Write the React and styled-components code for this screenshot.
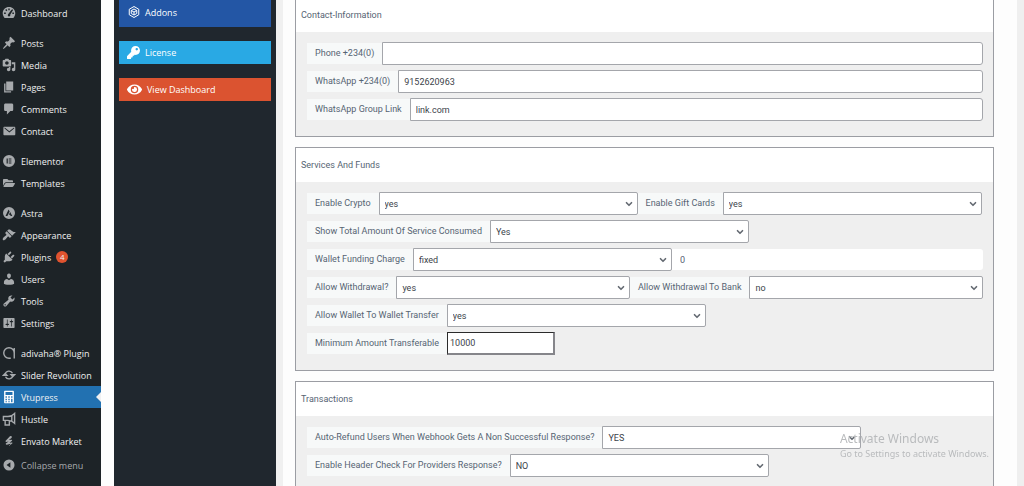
import { useState } from "react";
import styled, { createGlobalStyle } from "styled-components";
import { FaEye, FaFolderOpen, FaKey } from "react-icons/fa";
import { SiEnvato } from "react-icons/si";
import { ChevronDown } from "lucide-react";

// 20x20 admin glyphs
const glyphs = {
  dashboard:
    "M3.8 17h12.4c1.6-1.7 2.8-4.1 2.8-6.7C19 5.4 15 1.5 10 1.5s-9 3.9-9 8.8C1 12.9 2.2 15.3 3.8 17zM9 3.5h2v2.5H9zM4.6 5.8l1.5-1.4 1.5 1.7-1.4 1.4zM13 6.2l1.7-1.7 1.2 1.2-4.2 6.8c.5 1.3-.4 2.5-1.7 2.5s-2.2-1.5-1.5-2.7zM3 9.3h2.4v2H3zM14.8 9.3H17v2h-2.2z",
  posts:
    "M10.44 3.02l1.82-1.82 6.36 6.35-1.83 1.82c-1.05-.68-2.48-.57-3.41.36l-.75.75c-.92.93-1.04 2.35-.35 3.41l-1.83 1.82-2.41-2.41-2.8 2.79c-.42.42-3.38 2.71-3.8 2.29s1.86-3.39 2.28-3.81l2.79-2.79L4.1 9.36l1.83-1.82c1.05.69 2.48.57 3.4-.36l.75-.75c.93-.92 1.05-2.35.36-3.41z",
  media:
    "M13 11V4c0-.55-.45-1-1-1h-1.67L9 1H5L3.67 3H2c-.55 0-1 .45-1 1v7c0 .55.45 1 1 1h10c.55 0 1-.45 1-1zM7 4.5c1.38 0 2.5 1.12 2.5 2.5S8.38 9.5 7 9.5 4.5 8.38 4.5 7 5.62 4.5 7 4.5zM14 6h5v10.5c0 1.38-1.12 2.5-2.5 2.5S14 17.88 14 16.5s1.12-2.5 2.5-2.5c.17 0 .34.02.5.05V9h-3V6zM10 14.05V13h2v3.5c0 1.38-1.12 2.5-2.5 2.5S7 17.88 7 16.5 8.12 14 9.5 14c.17 0 .34.02.5.05z",
  pages: "M6 15V2h10v13H6zM5 16h8v2H3V5h2v11z",
  comments:
    "M5 2h9c1.1 0 2 .9 2 2v7c0 1.1-.9 2-2 2h-2l-5 5v-5H5c-1.1 0-2-.9-2-2V4c0-1.1.9-2 2-2z",
  contact:
    "M3.5 4h14c.8 0 1.5.7 1.5 1.5v9c0 .8-.7 1.5-1.5 1.5h-14c-.8 0-1.5-.7-1.5-1.5v-9C2 4.7 2.7 4 3.5 4zM3.3 5.4l.4 1.2 6.8 5.6 6.8-5.6.4-1.2-1-.1-6.2 5-6.2-5z",
  elementor:
    "M10 0a10 10 0 1 0 0 20 10 10 0 0 0 0-20zM6 6h2v8H6zM9.5 6H14v1.5H9.5zM9.5 9.2H14v1.6H9.5zM9.5 12.5H14V14H9.5z",
  astra:
    "M10 0a10 10 0 1 0 0 20 10 10 0 0 0 0-20zM9.3 4l1.8 3.5L7.3 15H4.2zM12 8.5l3.5 6.5h-2.8l-.9-2H9.7z",
  appearance:
    "M14.48 11.06L7.41 3.99l1.5-1.5c.5-.56 2.3-.47 3.51.32 1.21.8 1.43 1.28 2.91 2.1 1.18.64 2.45 1.26 4.45.85zM13.77 11.77L6.7 4.7 4.93 6.47c-.39.39-.39 1.02 0 1.41l1.06 1.06c.39.39.39 1.03 0 1.42-.6.6-1.43 1.11-2.21 1.69-.35.26-.7.53-1.01.84C1.43 14.23.4 16.08 1.4 17.07c.99 1 2.84-.03 4.18-1.36.31-.31.58-.66.85-1.02.57-.78 1.08-1.61 1.69-2.21.39-.39 1.02-.39 1.41 0l1.06 1.06c.39.39 1.02.39 1.41 0z",
  plugins:
    "M13.11 4.36L9.87 7.6 8 5.73l3.24-3.24c.35-.34 1.05-.2 1.56.32.52.51.66 1.21.31 1.55zm-8 1.77l.91-1.12 9.01 9.01-1.19.84c-.71.71-2.63 1.16-3.82 1.16H6.14L4.9 17.26c-.59.59-1.54.59-2.12 0-.59-.58-.59-1.53 0-2.12l1.24-1.24v-3.88c0-1.13.4-3.19 1.09-3.89zm7.26 3.97l3.24-3.24c.34-.35 1.04-.21 1.55.31.52.51.66 1.21.31 1.55l-3.24 3.25z",
  users:
    "M10 9.25c-2.27 0-2.73-3.44-2.73-3.44C7 4.02 7.82 2 9.97 2c2.16 0 2.98 2.02 2.71 3.81 0 0-.41 3.44-2.68 3.44zm0 2.57L12.72 10c2.39 0 4.52 2.33 4.52 4.53v2.49s-3.65 1.13-7.24 1.13c-3.65 0-7.24-1.13-7.24-1.13v-2.49c0-2.25 1.94-4.48 4.47-4.48z",
  tools:
    "M16.68 9.77c-1.34 1.34-3.3 1.67-4.95.99l-5.41 6.52c-.99.99-2.59.99-3.58 0s-.99-2.59 0-3.57l6.52-5.42c-.68-1.65-.35-3.61.99-4.95 1.28-1.28 3.12-1.62 4.72-1.06l-2.89 2.89 2.82 2.82 2.86-2.87c.53 1.58.18 3.39-1.08 4.65zM3.81 16.21c.4.39 1.04.39 1.43 0 .4-.4.4-1.04 0-1.43-.39-.4-1.03-.4-1.43 0-.39.39-.39 1.03 0 1.43z",
  settings:
    "M18 16V4c0-.55-.45-1-1-1H3c-.55 0-1 .45-1 1v12c0 .55.45 1 1 1h14c.55 0 1-.45 1-1zM8 11h1c.55 0 1 .45 1 1s-.45 1-1 1H8v1.5c0 .28-.22.5-.5.5s-.5-.22-.5-.5V13H6c-.55 0-1-.45-1-1s.45-1 1-1h1V5.5c0-.28.22-.5.5-.5s.5.22.5.5V11zm5-2h-1c-.55 0-1-.45-1-1s.45-1 1-1h1V5.5c0-.28.22-.5.5-.5s.5.22.5.5V7h1c.55 0 1 .45 1 1s-.45 1-1 1h-1v5.5c0 .28-.22.5-.5.5s-.5-.22-.5-.5V9z",
  vtupress:
    "M4 1h12c.6 0 1 .4 1 1v16c0 .6-.4 1-1 1H4c-.6 0-1-.4-1-1V2c0-.6.4-1 1-1zM5 3v4h10V3zM5 9v2h2V9zM9 9v2h2V9zM13 9v2h2V9zM5 12.5v2h2v-2zM9 12.5v2h2v-2zM5 16v1.5h2V16zM9 16v1.5h2V16zM13 12.5v5h2v-5z",
  collapse:
    "M10 2.1a7.9 7.9 0 1 0 0 15.8 7.9 7.9 0 0 0 0-15.8zM12 6.1v7.8L6.5 10z",
};

const outlines = {
  adivaha: "M17.5 3v15M17.5 10a7.5 7.5 0 1 0-7.5 7.5h2.5",
  slider: "M4.5 9a5.6 5.6 0 0 1 10.5-1.5M15.500 11a5.600 5.600 0 0 1-10.500 1.500M2 10.500h5L4.500 8zM18 9.500h-5l2.500 2.500z",
  hustle: "M18 2v14c-3-3-6-4-9.500-4H2V6.500h6.500C12 6.500 15 5 18 2zM4.500 12v6.500h6V12.500M14 5v8",
};

const Glyph = ({ name }) => {
  if (name === "templates") return <FaFolderOpen size={12} />;
  if (name === "envato") return <SiEnvato size={10} />;
  if (outlines[name]) {
    return (
      <svg width="14" height="14" viewBox="0 0 20 20" fill="none" stroke="currentColor" strokeWidth="2">
        <path d={outlines[name]} />
      </svg>
    );
  }
  const small = name === "elementor" || name === "astra";
  return (
    <svg width={small ? 12 : 14} height={small ? 12 : 14} viewBox="0 0 20 20" fill="currentColor">
      <path fillRule="evenodd" d={glyphs[name]} />
    </svg>
  );
};

const menu = [
  [["dashboard", "Dashboard"]],
  [
    ["posts", "Posts"],
    ["media", "Media"],
    ["pages", "Pages"],
    ["comments", "Comments"],
    ["contact", "Contact"],
  ],
  [
    ["elementor", "Elementor"],
    ["templates", "Templates"],
  ],
  [
    ["astra", "Astra"],
    ["appearance", "Appearance"],
    ["plugins", "Plugins", 4],
    ["users", "Users"],
    ["tools", "Tools"],
    ["settings", "Settings"],
  ],
  [
    ["adivaha", "adivaha® Plugin"],
    ["slider", "Slider Revolution"],
    ["vtupress", "Vtupress"],
    ["hustle", "Hustle"],
    ["envato", "Envato Market"],
  ],
];

const SelectField = ({ id, label, value, options }) => {
  const [current, setCurrent] = useState(value);
  return (
    <>
      <Label htmlFor={id}>{label}</Label>
      <SelectBox>
        <Select id={id} value={current} onChange={(e) => setCurrent(e.target.value)}>
          {options.map((o) => (
            <option key={o}>{o}</option>
          ))}
        </Select>
        <Arrow size={10} strokeWidth={4} />
      </SelectBox>
    </>
  );
};

const TextField = ({ id, label, value }) => (
  <Row>
    <Label htmlFor={id}>{label}</Label>
    <Input id={id} type="text" defaultValue={value} />
  </Row>
);

const yesNo = ["yes", "no"];

const App = () => {
  return (
    <Page>
      <GlobalStyle />
      <Sidebar>
        {menu.map((group, i) => (
          <MenuGroup key={i}>
            {group.map(([icon, text, count]) => (
              <li key={icon}>
                <MenuLink href="#" $active={icon === "vtupress"}>
                  <IconSlot>
                    <Glyph name={icon} />
                  </IconSlot>
                  {text}
                  {count && <Badge>{count}</Badge>}
                </MenuLink>
              </li>
            ))}
          </MenuGroup>
        ))}
        <Collapse type="button">
          <IconSlot>
            <Glyph name="collapse" />
          </IconSlot>
          Collapse menu
        </Collapse>
      </Sidebar>

      <SidePanel>
        <PanelLink href="#" $color="#2356a5" $tall>
          <svg width="12" height="12" viewBox="0 0 24 24" fill="none" stroke="currentColor" strokeWidth="2">
            <path d="M12 1l9.5 5.5v11L12 23l-9.5-5.5v-11zM12 6l5.5 3v6L12 18l-5.5-3V9zM6.5 9l5.5 3 5.5-3M12 12v6" />
          </svg>
          Addons
        </PanelLink>
        <PanelLink href="#" $color="#29a9e4">
          <FaKey size={13} />
          License
        </PanelLink>
        <PanelLink href="#" $color="#db5330">
          <FaEye size={15} />
          View Dashboard
        </PanelLink>
      </SidePanel>

      <Main>
        <Card>
          <CardTitle>Contact-Information</CardTitle>
          <CardBody>
            <TextField id="phone" label="Phone +234(0)" value="" />
            <TextField id="whatsapp" label="WhatsApp +234(0)" value="9152620963" />
            <TextField id="group" label="WhatsApp Group Link" value="link.com" />
          </CardBody>
        </Card>

        <Card>
          <CardTitle>Services And Funds</CardTitle>
          <CardBody>
            <Row>
              <SelectField id="crypto" label="Enable Crypto" value="yes" options={yesNo} />
              <SelectField id="gift" label="Enable Gift Cards" value="yes" options={yesNo} />
            </Row>
            <Row>
              <SelectField id="total" label="Show Total Amount Of Service Consumed" value="Yes" options={["Yes", "No"]} />
            </Row>
            <Row>
              <SelectField id="charge" label="Wallet Funding Charge" value="fixed" options={["fixed", "percentage"]} />
              <PlainInput type="text" aria-label="Charge amount" defaultValue="0" />
            </Row>
            <Row>
              <SelectField id="withdraw" label="Allow Withdrawal?" value="yes" options={yesNo} />
              <SelectField id="bank" label="Allow Withdrawal To Bank" value="no" options={yesNo} />
            </Row>
            <Row>
              <SelectField id="transfer" label="Allow Wallet To Wallet Transfer" value="yes" options={yesNo} />
            </Row>
            <Row>
              <Label htmlFor="minimum">Minimum Amount Transferable</Label>
              <AmountInput id="minimum" type="text" defaultValue="10000" />
            </Row>
          </CardBody>
        </Card>

        <Card>
          <CardTitle>Transactions</CardTitle>
          <CardBody>
            <Row>
              <SelectField
                id="refund"
                label="Auto-Refund Users When Webhook Gets A Non Successful Response?"
                value="YES"
                options={["YES", "NO"]}
              />
            </Row>
            <Row>
              <SelectField
                id="header"
                label="Enable Header Check For Providers Response?"
                value="NO"
                options={["YES", "NO"]}
              />
            </Row>
          </CardBody>
        </Card>
      </Main>

      <Watermark>
        <strong>Activate Windows</strong>
        <span>Go to Settings to activate Windows.</span>
      </Watermark>
    </Page>
  );
};

export default App;

const GlobalStyle = createGlobalStyle`
  * {
    box-sizing: border-box;
  }
  body {
    margin: 0;
    background-color: #efefef;
    font-family: Roboto, "Liberation Sans", sans-serif;
    font-size: 9px;
    color: #566473;
  }
`;

const Page = styled.div`
  display: flex;
  height: 100vh;
  overflow: hidden;
  background-color: #fdfdfd;
`;

const Sidebar = styled.nav`
  flex: none;
  width: 101px;
  padding-top: 2px;
  background-color: #1d2327;
  color: #a7aaad;
  font-family: "Open Sans", sans-serif;
`;

const MenuGroup = styled.ul`
  list-style: none;
  margin: 0 0 8px;
  padding: 0;
  &:last-of-type {
    margin-bottom: 2px;
  }
`;

const MenuLink = styled.a`
  position: relative;
  display: flex;
  align-items: center;
  gap: 5px;
  height: 22px;
  padding-left: 2px;
  color: #f0f0f1;
  white-space: nowrap;
  text-decoration: none;
  background-color: ${(props) => (props.$active ? "#2271b1" : "transparent")};
  svg {
    color: ${(props) => (props.$active ? "#ffffff" : "#a7aaad")};
  }
  &::after {
    content: "";
    display: ${(props) => (props.$active ? "block" : "none")};
    position: absolute;
    right: 0;
    border: 5px solid transparent;
    border-right-color: #f0f0f1;
    border-left-width: 0;
  }
`;

const IconSlot = styled.span`
  display: flex;
  flex: none;
  justify-content: center;
  width: 14px;
`;

const Badge = styled.span`
  width: 12px;
  border-radius: 6px;
  background-color: #e0532f;
  font-size: 8px;
  line-height: 12px;
  text-align: center;
`;

const Collapse = styled.button`
  display: flex;
  align-items: center;
  gap: 5px;
  height: 22px;
  padding: 0 0 0 2px;
  border: none;
  background: none;
  color: #a7aaad;
  font: inherit;
  white-space: nowrap;
`;

const SidePanel = styled.aside`
  display: flex;
  flex: none;
  flex-direction: column;
  gap: 14px;
  width: 169px;
  margin-left: 13px;
  padding: 0 5px;
  border-right: 7px solid #f0f0f0;
  background-color: #20272e;
  font-family: "Open Sans", sans-serif;
`;

const PanelLink = styled.a`
  display: flex;
  align-items: center;
  gap: 5px;
  height: ${(props) => (props.$tall ? "27px" : "23px")};
  padding: ${(props) => (props.$tall ? "0 9px 3px" : "0 8px")};
  background-color: ${(props) => props.$color};
  color: #ffffff;
  text-decoration: none;
`;

const Main = styled.main`
  flex: 1;
  min-width: 0;
  margin-top: -3px;
  padding: 0 23px 0 12px;
  border-right: 7px solid #efefef;
`;

const Card = styled.section`
  margin-bottom: 10px;
  border: 1px solid #9b9da3;
  background-color: #efefef;
`;

const CardTitle = styled.h2`
  margin: 0;
  padding: 0 5px;
  background-color: #ffffff;
  font-size: 9px;
  font-weight: 400;
  line-height: 34px;
`;

const CardBody = styled.div`
  display: flex;
  flex-direction: column;
  gap: 5px;
  padding: 10px 10px 15px 11px;
`;

const Row = styled.div`
  display: flex;
  align-items: center;
  height: 23px;
`;

const Label = styled.label`
  flex: none;
  padding: 0 8px;
  background-color: #f7f9f9;
  line-height: 21px;
  white-space: nowrap;
`;

const Input = styled.input`
  flex: 1;
  min-width: 0;
  height: 23px;
  padding: 0 5px;
  border: 1px solid #a4a6ab;
  border-radius: 0 3px 3px 0;
  background-color: #ffffff;
  color: #3c434a;
  font: inherit;
`;

const PlainInput = styled(Input)`
  height: 21px;
  padding: 0 8px;
  border: none;
  color: #566473;
`;

const AmountInput = styled(Input)`
  flex: 0 1 108px;
  padding: 0 2px;
  border-style: solid;
  border-color: #2b2b2b #85858a #85858a #2b2b2b;
  border-width: 1px 2px 2px 1px;
  border-radius: 0;
`;

const SelectBox = styled.div`
  position: relative;
  flex: 0 1 259px;
  min-width: 0;
`;

const Select = styled.select`
  display: block;
  width: 100%;
  height: 23px;
  padding: 0 5px;
  appearance: none;
  border: 1px solid #a4a6ab;
  border-radius: 0 2px 2px 0;
  background-color: #ffffff;
  color: #3c434a;
  font: inherit;
`;

const Arrow = styled(ChevronDown)`
  position: absolute;
  top: 7px;
  right: 4px;
  color: #646a72;
  pointer-events: none;
`;

const Watermark = styled.div`
  position: fixed;
  right: 35px;
  bottom: 26px;
  display: flex;
  flex-direction: column;
  color: #b9bbbd;
  font-family: "Noto Sans", sans-serif;
  font-size: 9px;
  line-height: 13px;
  pointer-events: none;
  strong {
    font-size: 12px;
    font-weight: 400;
    line-height: 16px;
  }
`;
